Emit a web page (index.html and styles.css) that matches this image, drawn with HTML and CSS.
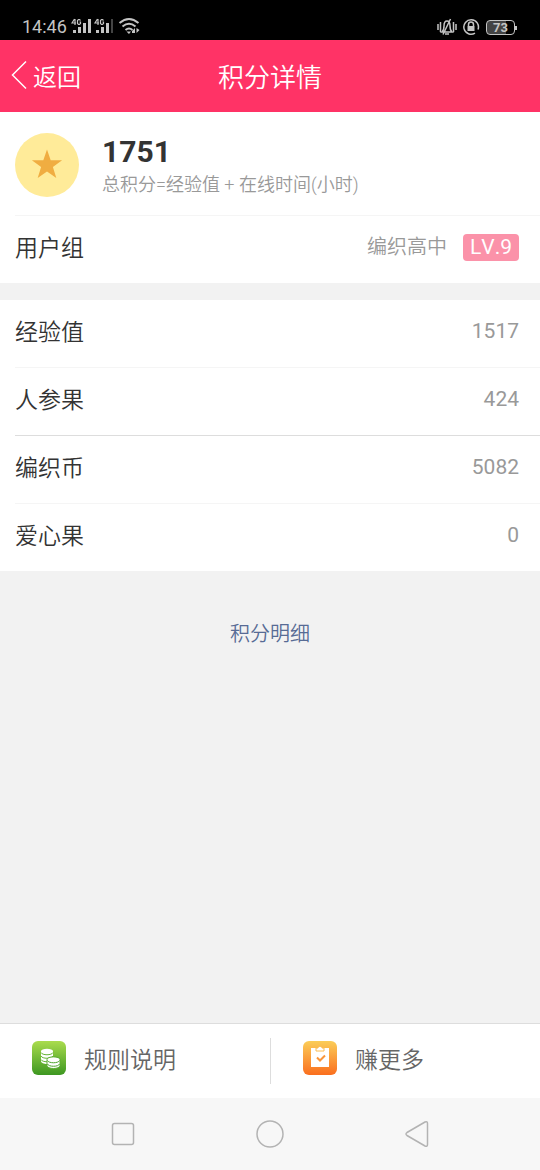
FILE: index.html
```html
<!DOCTYPE html>
<html lang="zh-CN">
<head>
<meta charset="utf-8">
<meta name="viewport" content="width=device-width, initial-scale=1">
<title>积分详情</title>
<link rel="stylesheet" href="styles.css">
</head>
<body>
<div class="status">
  <div class="status-group">
    <span class="clock">14:46</span>
    <svg class="signals" width="74" height="20" viewBox="0 0 74 20" fill="#c4c4c4" aria-hidden="true">
      <path d="M3.500 2 1 6h4M4 2v6M9.500 3.500 8.500 2.500H7.500L6.500 3.500v3l1 1h1l1-1v-1.500H8.500" fill="none" stroke="#c4c4c4" stroke-width="1.200"/>
      <path d="M2 13h3v3H2zM7 10h3v6H7zM12 6h3v10h-3zM17 2h3v14h-3z"/>
      <g transform="translate(23 0)">
        <path d="M3.500 2 1 6h4M4 2v6M9.500 3.500 8.500 2.500H7.500L6.500 3.500v3l1 1h1l1-1v-1.500H8.500" fill="none" stroke="#c4c4c4" stroke-width="1.200"/>
        <path d="M2 13h3v3H2zM7 10h3v6H7zM12 6h3v10h-3z"/>
        <path d="M17 2h2v14h-2z" fill="#444"/>
      </g>
      <path d="M48.500 6q9.500-8 19 0M51.500 9.500q6.500-5.500 13 0M54.500 13q3.500-3 7 0" fill="none" stroke="#c4c4c4" stroke-width="2"/>
      <path d="M55.500 14.500h4.500L58 17zM61 14l3-3v5h-3zM65.500 11v5l3-3z"/>
    </svg>
  </div>
  <div class="status-group">
    <svg width="22" height="20" viewBox="0 0 22 20" fill="none" stroke="#c4c4c4" stroke-width="1.500" aria-hidden="true">
      <path d="M2 7v6M4.500 5v10M17.500 5v10M20 7v6M6 15c2-1.500 2-3 2-6 0-3 1-5 3-5s3 2 3 5 0 4.500 2 6zM9 17h4M7 17.500 14.500 2"/>
    </svg>
    <svg width="18" height="18" viewBox="0 0 18 18" aria-hidden="true">
      <path d="M13 15.200A7.300 7.300 0 1 1 16 11.500" fill="none" stroke="#c4c4c4" stroke-width="1.500"/>
      <path d="M5.500 8h7v5h-7z" fill="#c4c4c4"/>
      <path d="M6.500 8V6.500a2.500 2.500 0 0 1 5 0V8" fill="none" stroke="#c4c4c4" stroke-width="1.500"/>
    </svg>
    <span class="battery">73</span>
  </div>
</div>

<header class="header">
  <a class="back" href="#">
    <svg width="16" height="30" viewBox="0 0 16 30" fill="none" stroke="#fff" stroke-width="1.500" aria-hidden="true"><path d="M15 1.500 1.500 15 15 28.500"/></svg>
    返回
  </a>
  <h1 class="title">积分详情</h1>
</header>

<main class="main">
  <section class="panel">
    <div class="summary">
      <svg class="medal" width="64" height="64" viewBox="0 0 64 64" aria-hidden="true">
        <circle cx="32" cy="32" r="32" fill="#ffeb99"/>
        <path d="M32 16.500l3.700 10.800h11.400l-9.200 6.800 3.400 11-9.300-6.600-9.300 6.600 3.400-11-9.200-6.800h11.400z" fill="#f0ad41"/>
      </svg>
      <div>
        <div class="total">1751</div>
        <div class="formula">总积分=经验值 + 在线时间(小时)</div>
      </div>
    </div>
    <dl class="rows">
      <div class="row divided faint">
        <dt>用户组</dt>
        <dd class="group">编织高中 <span class="level">LV.9</span></dd>
      </div>
    </dl>
  </section>
  <section class="panel scores">
    <dl class="rows">
      <div class="row"><dt>经验值</dt><dd>1517</dd></div>
      <div class="row divided faint"><dt>人参果</dt><dd>424</dd></div>
      <div class="row divided"><dt>编织币</dt><dd>5082</dd></div>
      <div class="row divided faint"><dt>爱心果</dt><dd>0</dd></div>
    </dl>
  </section>
  <a class="detail" href="#">积分明细</a>
</main>

<footer class="actions">
  <a class="action" href="#">
    <svg width="34" height="34" viewBox="0 0 34 34" aria-hidden="true">
      <defs><linearGradient id="green" x2="0" y2="1"><stop stop-color="#aadc4d"/><stop offset="1" stop-color="#3d9721"/></linearGradient></defs>
      <rect width="34" height="34" rx="6" fill="url(#green)"/>
      <path d="M9 10v10c0 4 12 4 12 0V10z" fill="#fff"/>
      <ellipse cx="15" cy="10" rx="6" ry="2.200" fill="#fff"/>
      <path d="M9 11.500c1 3 11 3 12 0M9 15c1 3 11 3 12 0M9 18.500c1 3 11 3 12 0" fill="none" stroke="#64b336"/>
      <path d="M15 18.500v6c0 4 13 4 13 0v-6c0-3.500-13-3.500-13 0z" fill="#fff" stroke="#5bad31"/>
      <path d="M15.500 19.500c1 3 11 3 12 0M15.500 23c1 3 11 3 12 0" fill="none" stroke="#4ca42b"/>
    </svg>
    <span class="action-label">规则说明</span>
  </a>
  <a class="action split" href="#">
    <svg width="34" height="34" viewBox="0 0 34 34" aria-hidden="true">
      <defs><linearGradient id="orange" x2="0" y2="1"><stop stop-color="#fbcd58"/><stop offset="1" stop-color="#fa6e1e"/></linearGradient></defs>
      <rect width="34" height="34" rx="6" fill="url(#orange)"/>
      <path d="M8 7h18v19H8z" fill="#fff"/>
      <path d="M13 7h2c0-2 4-2 4 0h2v3h-8z" fill="#fff" stroke="#fbbc50"/>
      <path d="M14 16.500l3 3 5-5" fill="none" stroke="#fa963a" stroke-width="2"/>
    </svg>
    <span class="action-label">赚更多</span>
  </a>
</footer>

<nav class="system" aria-label="系统导航">
  <button class="key" type="button" aria-label="最近任务"><svg width="28" height="28" viewBox="0 0 28 28"><rect x="3.500" y="3.500" width="21" height="21" rx="2"/></svg></button>
  <button class="key" type="button" aria-label="主屏幕"><svg width="28" height="28" viewBox="0 0 28 28"><circle cx="14" cy="14" r="13"/></svg></button>
  <button class="key" type="button" aria-label="返回"><svg width="28" height="28" viewBox="0 0 28 28"><path d="M22 2 4 12.500q-2 1.500 0 3L22 26q2.500 1 2.500-1.500v-21Q24.500 1 22 2z"/></svg></button>
</nav>
</body>
</html>
```
FILE: styles.css
```css
* { box-sizing: border-box; }
body {
  margin: 0;
  min-height: 100vh;
  display: flex;
  flex-direction: column;
  background: #f2f2f2;
  color: #333;
  font-family: Roboto, "Noto Sans CJK SC", sans-serif;
  font-weight: 350;
}
a { color: inherit; text-decoration: none; }
svg { flex: none; display: block; }

.status {
  height: 40px;
  padding: 14px 25px 0 22px;
  display: flex;
  justify-content: space-between;
  background: #000;
  color: #c4c4c4;
}
.status-group { display: flex; align-items: center; gap: 4px; }
.clock { font-size: 18px; font-weight: 400; line-height: 26px; }
.battery {
  position: relative;
  width: 29px;
  margin-left: 2px;
  border: 1px solid #c4c4c4;
  border-radius: 4px;
  background: linear-gradient(90deg, #444 70%, #000 70%);
  font-size: 13px;
  font-weight: 700;
  line-height: 13px;
  text-align: center;
}
.battery::after {
  content: "";
  position: absolute;
  top: 5px;
  right: -3px;
  width: 2px;
  height: 4px;
  background: #c4c4c4;
}

.header {
  height: 72px;
  padding: 4px 11px 0;
  display: grid;
  grid-template-columns: 1fr auto 1fr;
  align-items: center;
  background: #ff3366;
  color: #fff;
}
.back { display: flex; align-items: flex-start; gap: 6px; font-size: 24px; line-height: 36px; }
.title { margin: 0; font-size: 26px; font-weight: 350; line-height: 36px; }

.main { flex: 1; }
.panel { background: #fff; }
.summary { padding: 20px 15px 17px; display: flex; align-items: center; gap: 23px; }
.total { font-size: 30px; font-weight: 700; line-height: 40px; }
.formula { color: #999; font-size: 18px; line-height: 26px; }
.scores { margin-top: 17px; }
.rows { margin: 0; padding-left: 15px; }
.row {
  padding: 15px 21px 16px 0;
  display: flex;
  align-items: flex-start;
  justify-content: space-between;
  font-size: 23px;
  line-height: 36px;
}
.divided { border-top: 1px solid #ddd; }
.faint { border-color: #f5f5f5; }
.row dd { margin: 0; color: #999; font-size: 21px; font-weight: 400; line-height: 32px; }
.row .group { display: flex; align-items: center; gap: 16px; font-size: 20px; font-weight: 350; }
.level {
  padding: 0 7px;
  border-radius: 4px;
  background: #fb92a9;
  color: #fff;
  font-size: 21px;
  font-weight: 400;
  font-kerning: none;
  line-height: 27px;
}
.detail {
  display: block;
  width: fit-content;
  margin: 48px auto;
  color: #576b95;
  font-size: 20px;
  line-height: 30px;
}

.actions {
  padding: 14px 0;
  display: grid;
  grid-template-columns: 1fr 1fr;
  border-top: 1px solid #ddd;
  background: #fff;
  color: #666;
}
.action {
  height: 46px;
  padding: 3px 32px;
  display: flex;
  align-items: flex-start;
  gap: 18px;
  font-size: 23px;
}
.action-label { line-height: 40px; }
.split { border-left: 1px solid #ddd; }

.system {
  height: 72px;
  padding: 0 49px;
  display: grid;
  grid-template-columns: repeat(3, 1fr);
  background: #f7f7f7;
}
.key {
  padding: 0;
  border: 0;
  display: grid;
  place-items: center;
  background: none;
}
.key svg { fill: none; stroke: #b3b3b3; stroke-width: 1.5; }
```
